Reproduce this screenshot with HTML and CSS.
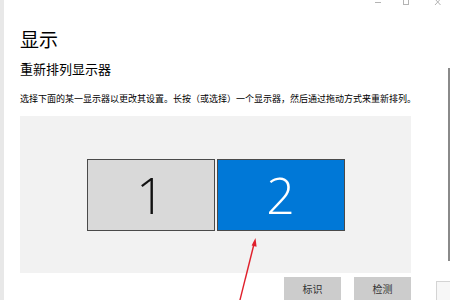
FILE: index.html
```html
<!DOCTYPE html>
<html>
<head>
  <meta charset="utf-8">
  <title>显示</title>
  <link rel="stylesheet" href="styles.css">
</head>
<body>
  <div class="window">
    <div class="strip"></div>
    <div class="page">
      <div class="titlebar">
        <svg class="controls" width="80" height="10" viewBox="0 0 80 10">
          <path d="M5 2.5 H11" stroke="#b4b4b4" stroke-width="1"/>
          <rect x="33.5" y="-1.5" width="5" height="6" fill="none" stroke="#b4b4b4" stroke-width="1"/>
          <path d="M65 -1 L70.5 5 M70.5 -1 L65 5" stroke="#b4b4b4" stroke-width="1"/>
        </svg>
      </div>
      <h1 class="title">显示</h1>
      <h2 class="subtitle">重新排列显示器</h2>
      <p class="hint">选择下面的某一显示器以更改其设置。长按（或选择）一个显示器，然后通过拖动方式来重新排列。</p>
      <div class="panel">
        <div class="monitors">
          <div class="monitor">1</div>
          <div class="monitor active">2</div>
        </div>
      </div>
      <div class="actions">
        <button class="btn">标识</button>
        <button class="btn">检测</button>
      </div>
    </div>
    <div class="side">
      <div class="scrollbar"></div>
      <div class="stub"></div>
    </div>
    <svg class="arrow" width="40" height="70" viewBox="0 0 40 70">
      <path d="M6 72 L22.5 6" stroke="#e0202c" stroke-width="1.4" fill="none"/>
      <path d="M23.5 2 L19.6 9.5 L24.6 10.7 Z" fill="#e0202c"/>
    </svg>
  </div>
</body>
</html>
```

FILE: styles.css
```css
body {
  margin: 0;
  background: #fff;
  font-family: "Noto Sans CJK SC", "Noto Sans", sans-serif;
  color: #000;
}

.window {
  position: relative;
  display: flex;
  width: 450px;
  height: 300px;
  overflow: hidden;
}

.strip {
  width: 4px;
  background: #e8e8e8;
}

.page {
  flex: 1;
  padding-left: 16px;
}

.titlebar {
  display: flex;
  justify-content: flex-end;
  height: 10px;
  margin-right: -14px;
}

.title {
  margin: 19px 0 0;
  font-size: 19px;
  line-height: 19px;
  font-weight: 400;
}

.subtitle {
  margin: 14px 0 0;
  font-size: 13px;
  line-height: 13px;
  font-weight: 400;
}

.hint {
  margin: 19px 0 0;
  font-size: 9px;
  line-height: 9px;
  white-space: nowrap;
}

.panel {
  margin-top: 13px;
  width: 391px;
  height: 157px;
  background: #f2f2f2;
}

.monitors {
  display: flex;
  justify-content: center;
  gap: 2px;
  padding-top: 43px;
}

.monitor {
  box-sizing: border-box;
  width: 128px;
  height: 72px;
  border: 1.5px solid #4a4a4a;
  background: #d9d9d9;
  display: flex;
  align-items: center;
  justify-content: center;
  font-family: "Open Sans", "Liberation Sans", sans-serif;
  font-weight: 300;
  font-size: 50px;
  color: #111;
}

.monitor.active {
  background: #0078d7;
  color: #fff;
}

.actions {
  display: flex;
  justify-content: flex-end;
  gap: 13px;
  width: 391px;
  margin-top: 4px;
}

.btn {
  width: 57px;
  height: 24px;
  border: 0;
  padding: 0 0 2px;
  background: #cccccc;
  font-family: "Noto Sans CJK SC", sans-serif;
  font-size: 10px;
  color: #333;
}

.side {
  width: 14px;
  display: flex;
  flex-direction: column;
  align-items: flex-end;
}

.scrollbar {
  flex-shrink: 0;
  width: 2px;
  height: 193px;
  margin-top: 68px;
  background: #8a8a8a;
}

.stub {
  flex-shrink: 0;
  align-self: stretch;
  margin-top: 20px;
  height: 30px;
  border: 1px solid #d4d4d4;
  border-right: 0;
  background: #f7f7f7;
}

.arrow {
  position: absolute;
  left: 232px;
  top: 236px;
  overflow: visible;
}
```
